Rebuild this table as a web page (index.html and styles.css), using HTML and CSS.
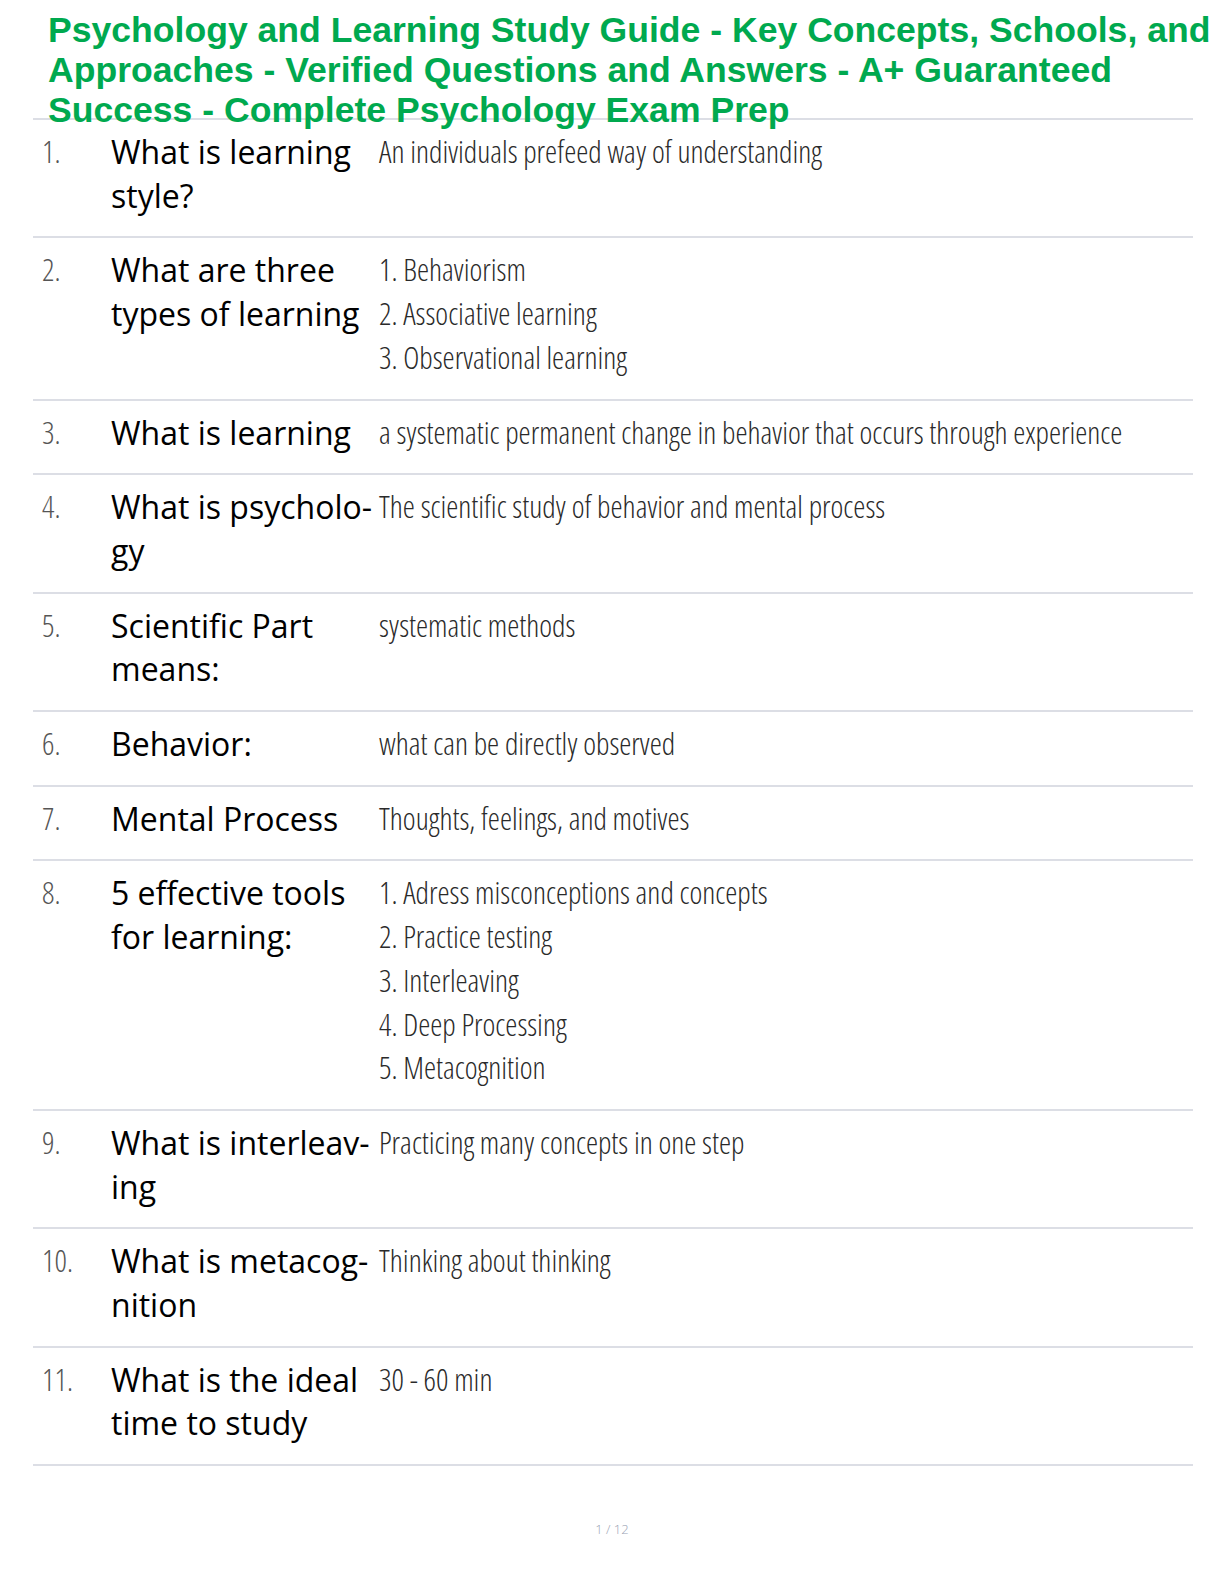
FILE: index.html
```html
<!DOCTYPE html>
<html lang="en">
<head>
  <meta charset="UTF-8">
  <title>Psychology and Learning Study Guide</title>
  <link rel="stylesheet" href="styles.css">
</head>
<body>
  <header class="titulo">
    <h1>Psychology and Learning Study Guide - Key Concepts, Schools, and<br>Approaches - Verified Questions and Answers - A+ Guaranteed<br>Success - Complete Psychology Exam Prep</h1>
  </header>
  <div class="lista">
    <div class="item">
      <div class="num">1.</div>
      <div class="pergunta">What is learning style?</div>
      <div class="resposta">An individuals prefeed way of understanding</div>
    </div>
    <div class="item">
      <div class="num">2.</div>
      <div class="pergunta">What are three types of learning</div>
      <div class="resposta">1. Behaviorism<br>2. Associative learning<br>3. Observational learning</div>
    </div>
    <div class="item">
      <div class="num">3.</div>
      <div class="pergunta">What is learning</div>
      <div class="resposta">a systematic permanent change in behavior that occurs through experience</div>
    </div>
    <div class="item">
      <div class="num">4.</div>
      <div class="pergunta">What is psycholo&shy;gy</div>
      <div class="resposta">The scientific study of behavior and mental process</div>
    </div>
    <div class="item">
      <div class="num">5.</div>
      <div class="pergunta">Scientific Part means:</div>
      <div class="resposta">systematic methods</div>
    </div>
    <div class="item">
      <div class="num">6.</div>
      <div class="pergunta">Behavior:</div>
      <div class="resposta">what can be directly observed</div>
    </div>
    <div class="item">
      <div class="num">7.</div>
      <div class="pergunta">Mental Process</div>
      <div class="resposta">Thoughts, feelings, and motives</div>
    </div>
    <div class="item">
      <div class="num">8.</div>
      <div class="pergunta">5 effective tools for learning:</div>
      <div class="resposta">1. Adress misconceptions and concepts<br>2. Practice testing<br>3. Interleaving<br>4. Deep Processing<br>5. Metacognition</div>
    </div>
    <div class="item">
      <div class="num">9.</div>
      <div class="pergunta">What is interleav&shy;ing</div>
      <div class="resposta">Practicing many concepts in one step</div>
    </div>
    <div class="item">
      <div class="num">10.</div>
      <div class="pergunta">What is metacog&shy;nition</div>
      <div class="resposta">Thinking about thinking</div>
    </div>
    <div class="item">
      <div class="num">11.</div>
      <div class="pergunta">What is the ideal time to study</div>
      <div class="resposta">30 - 60 min</div>
    </div>
  </div>
  <footer class="pagina">1 / 12</footer>
</body>
</html>
```

FILE: styles.css
```css
body {
  margin: 0;
  background: #fff;
  font-family: "Open Sans", "Liberation Sans", sans-serif;
}
.titulo {
  height: 118px;
  padding: 10px 0 0 48px;
  box-sizing: border-box;
}
.titulo h1 {
  margin: 0;
  font-family: "Liberation Sans", Arial, sans-serif;
  font-weight: bold;
  font-size: 35.6px;
  line-height: 40px;
  color: #00a94f;
  white-space: nowrap;
}
.lista {
  margin-left: 33px;
  width: 1160px;
  border-top: 2px solid #dcdee5;
}
.item {
  display: grid;
  grid-template-columns: 78px 268px 1fr;
  padding: 10px 0 19px 0;
  border-bottom: 2px solid #dcdee5;
  line-height: 43.7px;
}
.num, .resposta {
  font-family: "Open Sans", sans-serif;
  font-weight: 300;
  font-stretch: 75%;
  font-size: 30.6px;
  color: #2a2a2a;
}
.num {
  padding-left: 9px;
  color: #555;
}
.pergunta {
  font-size: 32px;
  color: #000;
  padding-right: 4px;
}
.pagina {
  margin-top: 54px;
  text-align: center;
  font-size: 13px;
  color: #9aa4b4;
  font-family: "Open Sans", sans-serif;
  font-weight: 300;
}
```
